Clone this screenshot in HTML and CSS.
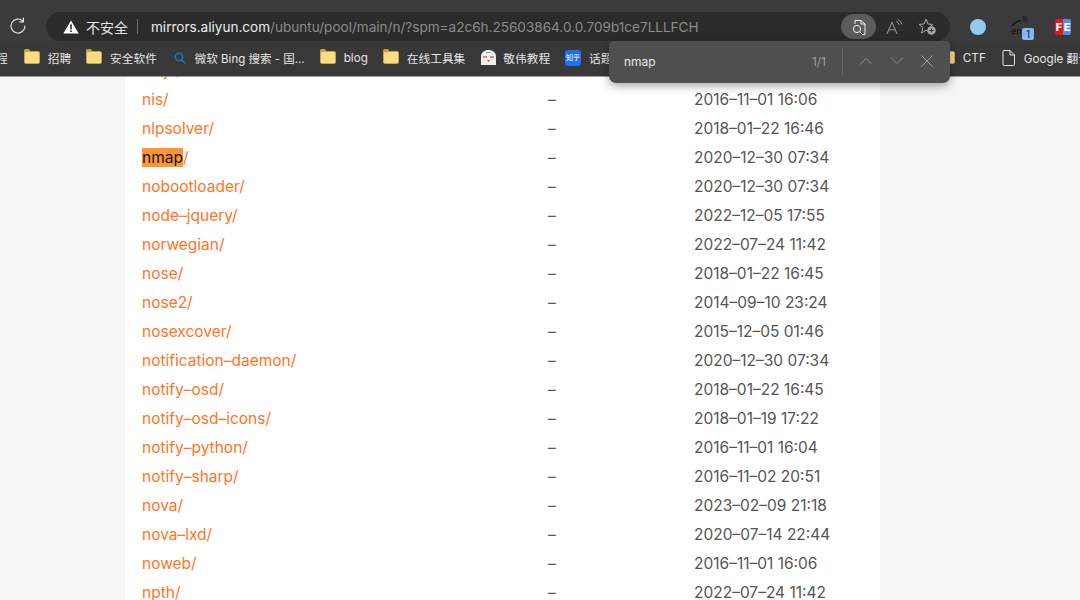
FILE: index.html
```html
<!DOCTYPE html>
<html lang="zh-CN">
<head>
<meta charset="utf-8">
<title>Index of /ubuntu/pool/main/n/</title>
<link rel="stylesheet" href="styles.css">
</head>
<body>
<header class="chrome">
  <div class="toolbar">
    <svg class="reload" width="18" height="18" viewBox="0 0 18 18" fill="none"><path d="M16 9a7 7 0 1 1-2.100-5" stroke="#e4e4e4" stroke-width="1.200" stroke-linecap="round"/><path d="M14.400 1.200v3.600h-3.600" stroke="#e4e4e4" stroke-width="1.200" stroke-linecap="round" stroke-linejoin="round"/></svg>
    <div class="address">
      <svg class="warn" width="16" height="14" viewBox="0 0 16 14"><path d="M8 0.400 15.700 13.600H.3Z" fill="#fff"/><rect x="7.200" y="4.400" width="1.600" height="5" fill="#2b2b2b"/><rect x="7.200" y="10.400" width="1.600" height="1.600" fill="#2b2b2b"/></svg>
      <span class="insecure">不安全</span>
      <span class="sep"></span>
      <span class="url"><b>mirrors.aliyun.com</b>/ubuntu/pool/main/n/?spm=a2c6h.25603864.0.0.709b1ce7LLLFCH</span>
      <div class="addr-icons">
        <span class="pill">
          <svg width="18" height="18" viewBox="0 0 18 18" fill="none" stroke="#f0f0f0" stroke-width="1"><path d="M5 6V2.500h6l4 3.500v10.500h-3"/><path d="M11 2.500V6h4"/><circle cx="7" cy="11" r="3.600"/><path d="m9.600 13.600 2.600 2.600" stroke-linecap="round"/></svg>
        </span>
        <svg class="read" width="18" height="16" viewBox="0 0 18 16" fill="none" stroke="#9b9b9b" stroke-width="1"><path d="M1 15 6 3l5 12M2.800 10.800h6.400"/><path d="M10.500 2.500a4 4 0 0 1 2.600 3M12 .6a6 6 0 0 1 3.800 4.600" stroke-linecap="round"/></svg>
        <svg class="fav" width="19" height="18" viewBox="0 0 19 18" fill="none"><path d="M8 1.200 10 6l5 .4-3.800 3.300L12.400 15 8 12.200 3.600 15l1.200-5.300L1 6.400 6 6Z" stroke="#a8a8a8" stroke-width="1" stroke-linejoin="round"/><circle cx="13.500" cy="12.500" r="4.200" fill="#a8a8a8"/><path d="M13.500 10.400v4.200M11.400 12.500h4.200" stroke="#2b2b2b" stroke-width="1.100"/></svg>
      </div>
    </div>
    <div class="extensions">
      <span class="dot"></span>
      <span class="translate">
        <svg width="14" height="10" viewBox="0 0 14 10" fill="none"><path d="M1 9c2-3 5-5 9-5.500" stroke="#111" stroke-width="1.300"/></svg>
        <span class="zh">简</span>
        <span class="en">en</span>
        <span class="count">1</span>
      </span>
      <span class="fe"><span class="fe-f">F</span><span class="fe-e">E</span></span>
    </div>
  </div>
  <nav class="bookmarks">
    <span class="bm bm-cut">程</span>
    <span class="bm"><span class="folder"></span>招聘</span>
    <span class="bm"><span class="folder"></span>安全软件</span>
    <span class="bm bm-search"><svg width="12" height="12" viewBox="0 0 12 12" fill="none" stroke="#1f6fc4" stroke-width="1.500"><circle cx="5" cy="5" r="3.700"/><path d="m8 8 3 3" stroke-linecap="round"/></svg>微软 Bing 搜索 - 国...</span>
    <span class="bm bm-blog"><span class="folder"></span>blog</span>
    <span class="bm"><span class="folder"></span>在线工具集</span>
    <span class="bm bm-avatar"><svg width="17" height="17" viewBox="0 0 17 17"><path d="M1 16V7.500C1 3.500 4.500 1 8.500 1S16 3.500 16 7.500V16Z" fill="#eee"/><path d="M3 8h4M10 8h4" stroke="#e8703a" stroke-width="1.500"/><path d="M7 11h3l-1.500 2Z" fill="#c9572e"/><path d="M6 3.500h5" stroke="#999" stroke-width="1"/></svg>敬伟教程</span>
    <span class="bm"><span class="zhihu">知乎</span>话题</span>
    <span class="bm bm-right"><span class="folder"></span>CTF</span>
    <span class="bm bm-last"><svg width="13" height="16" viewBox="0 0 13 16" fill="none" stroke="#e4e4e4" stroke-width="1"><path d="M1 1.500a1 1 0 0 1 1-1h6l4.500 4.500v9.500a1 1 0 0 1-1 1h-9.500a1 1 0 0 1-1-1Z"/><path d="M8 .5V5h4.500"/></svg>Google 翻译</span>
  </nav>
</header>

<div class="findbar">
  <span class="find-term">nmap</span>
  <span class="find-count">1/1</span>
  <span class="find-sep"></span>
  <svg class="find-btn" width="14" height="8" viewBox="0 0 14 8" fill="none" stroke="#8f8f8f" stroke-width="1"><path d="m1 7.500 6-6 6 6"/></svg>
  <svg class="find-btn" width="14" height="8" viewBox="0 0 14 8" fill="none" stroke="#8f8f8f" stroke-width="1"><path d="m1 .5 6 6 6-6"/></svg>
  <svg class="find-btn" width="12" height="12" viewBox="0 0 12 12" fill="none" stroke="#a0a0a0" stroke-width="1"><path d="m.5.5 11 11M11.500.5l-11 11"/></svg>
</div>

<main class="page">
  <div class="row"><a href="#">ninja/</a><span>–</span><time>2016–11–01 16:06</time></div>
  <div class="row"><a href="#">nis/</a><span>–</span><time>2016–11–01 16:06</time></div>
  <div class="row"><a href="#">nlpsolver/</a><span>–</span><time>2018–01–22 16:46</time></div>
  <div class="row"><a href="#"><mark>nmap</mark>/</a><span>–</span><time>2020–12–30 07:34</time></div>
  <div class="row"><a href="#">nobootloader/</a><span>–</span><time>2020–12–30 07:34</time></div>
  <div class="row"><a href="#">node–jquery/</a><span>–</span><time>2022–12–05 17:55</time></div>
  <div class="row"><a href="#">norwegian/</a><span>–</span><time>2022–07–24 11:42</time></div>
  <div class="row"><a href="#">nose/</a><span>–</span><time>2018–01–22 16:45</time></div>
  <div class="row"><a href="#">nose2/</a><span>–</span><time>2014–09–10 23:24</time></div>
  <div class="row"><a href="#">nosexcover/</a><span>–</span><time>2015–12–05 01:46</time></div>
  <div class="row"><a href="#">notification–daemon/</a><span>–</span><time>2020–12–30 07:34</time></div>
  <div class="row"><a href="#">notify–osd/</a><span>–</span><time>2018–01–22 16:45</time></div>
  <div class="row"><a href="#">notify–osd–icons/</a><span>–</span><time>2018–01–19 17:22</time></div>
  <div class="row"><a href="#">notify–python/</a><span>–</span><time>2016–11–01 16:04</time></div>
  <div class="row"><a href="#">notify–sharp/</a><span>–</span><time>2016–11–02 20:51</time></div>
  <div class="row"><a href="#">nova/</a><span>–</span><time>2023–02–09 21:18</time></div>
  <div class="row"><a href="#">nova–lxd/</a><span>–</span><time>2020–07–14 22:44</time></div>
  <div class="row"><a href="#">noweb/</a><span>–</span><time>2016–11–01 16:06</time></div>
  <div class="row"><a href="#">npth/</a><span>–</span><time>2022–07–24 11:42</time></div>
</main>
</body>
</html>
```
FILE: styles.css
```css
* { box-sizing: border-box; }
html, body { margin: 0; height: 600px; overflow: hidden; }
body {
  background: #f6f6f6;
  font-family: Inter, "Noto Sans CJK SC", sans-serif;
  position: relative;
}

/* browser chrome */
.chrome { position: relative; z-index: 2; }
.toolbar {
  height: 41px;
  background: #3b3b3b;
  display: flex;
  align-items: flex-end;
  padding-left: 9px;
}
.reload { margin: 0 19px 6px 0; }
.address {
  width: 904px;
  height: 29px;
  background: #2b2b2b;
  border-radius: 15px;
  display: flex;
  align-items: center;
  padding-left: 17px;
  color: #fff;
  font-size: 13.55px;
}
.insecure { margin-left: 7px; color: #e8e8e8; font-size: 14px; }
.sep { width: 1px; height: 15px; background: #6a6a6a; margin: 0 13px 0 9px; }
.url { color: #8c8c8c; white-space: nowrap; }
.url b { color: #ececec; font-weight: 400; }
.addr-icons { margin-left: auto; display: flex; align-items: center; padding-right: 13px; }
.pill {
  width: 35px; height: 25px;
  border-radius: 13px;
  background: #5c5c5c;
  display: flex; align-items: center; justify-content: center;
}
.read { margin-left: 10px; }
.fav { margin-left: 14px; }
.extensions { flex: 1; display: flex; align-items: center; height: 29px; padding-left: 20px; }
.dot { width: 16px; height: 16px; border-radius: 50%; background: #93cbf0; }
.translate { position: relative; width: 24px; height: 24px; margin-left: 23px; }
.translate svg { position: absolute; left: 2px; top: 2px; }
.zh { position: absolute; left: 13px; top: 0; font-size: 6px; line-height: 8px; color: #111; }
.en { position: absolute; left: 2px; top: 10px; font-size: 9px; color: #111; line-height: 12px; }
.count {
  position: absolute; left: 13px; top: 13px;
  width: 12px; height: 12px; border-radius: 2px;
  background: #8ab4f0; color: #123; font-size: 10px; line-height: 12px; text-align: center;
}
.fe { display: flex; margin-left: 22px; width: 16px; height: 16px; border-radius: 2px; overflow: hidden; font-size: 11px; font-weight: 800; line-height: 16px; color: #fff; text-align: center; }
.fe-f { width: 8px; background: #e3161d; }
.fe-e { width: 8px; background: #4d8ce8; }

.bookmarks {
  height: 36px;
  padding-bottom: 2px;
  background: #383838;
  border-bottom: 1px solid #9a9a9a;
  display: flex;
  align-items: center;
  overflow: hidden;
  font-size: 11.7px;
  color: #e6e6e6;
  white-space: nowrap;
}
.bm { display: flex; align-items: center; gap: 8px; margin-left: 15px; flex: none; }
.bm-cut { margin-left: -4px; margin-right: 1px; }
.bm-search { margin-left: 17px; gap: 9px; font-size: 11.5px; }
.bm-blog { margin-left: 15px; }
.bm-avatar { gap: 6px; }
.bm-right { margin-left: auto; }
.bm-last { margin-left: 16px; margin-right: -10px; gap: 9px; }
.folder {
  width: 16px; height: 13px;
  background: #f8dc82;
  border: 1px solid #c9a24c;
  border-radius: 2px;
  position: relative;
}
.folder::before {
  content: ""; position: absolute; left: -1px; top: -3px;
  width: 6px; height: 3px; background: #c9a24c; border-radius: 2px 2px 0 0;
}
.zhihu {
  width: 16px; height: 16px; border-radius: 3px;
  background: #1f6ff0; color: #fff; font-size: 7px; line-height: 16px; text-align: center;
}

/* find-in-page bar */
.findbar {
  position: absolute; z-index: 3;
  left: 609px; top: 41px;
  width: 341px; height: 42px;
  padding-bottom: 2px;
  background: #4f4f4f;
  border-radius: 4px 4px 7px 7px;
  box-shadow: 0 3px 10px rgba(0,0,0,.35);
  display: flex; align-items: center;
  padding-left: 15px;
  color: #e8e8e8; font-size: 12px;
}
.find-count { margin-left: auto; color: #9c9c9c; }
.find-sep { width: 1px; height: 28px; background: #666; margin: 0 16px; }
.find-btn { flex: none; margin-right: 17px; }

/* directory listing */
.page {
  width: 755px;
  margin: -21px 0 0 125px;
  background: #fff;
  padding-left: 17px;
  font-size: 15.5px;
  color: #555;
}
.row {
  display: grid;
  grid-template-columns: 406px 146px 1fr;
  height: 29px;
  align-items: center;
  white-space: nowrap;
}
.row a { color: #ff7426; text-decoration: none; }
mark { background: #ff9632; color: #111; }
```
